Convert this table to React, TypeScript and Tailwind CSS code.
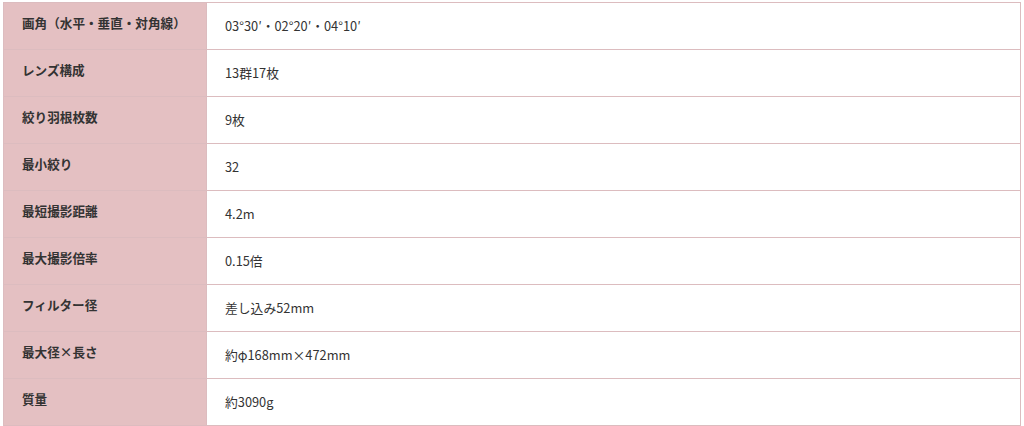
import React from "react";

const rows: [string, string][] = [
  ["画角（水平・垂直・対角線）", "03°30′・02°20′・04°10′"],
  ["レンズ構成", "13群17枚"],
  ["絞り羽根枚数", "9枚"],
  ["最小絞り", "32"],
  ["最短撮影距離", "4.2m"],
  ["最大撮影倍率", "0.15倍"],
  ["フィルター径", "差し込み52mm"],
  ["最大径×長さ", "約φ168mm×472mm"],
  ["質量", "約3090g"],
];

export default function App() {
  return (
    <div
      className="w-[1024px] h-[426px] bg-white pt-[2px] pl-[3px]"
      style={{ fontFamily: '"Noto Sans CJK JP", "Noto Sans", sans-serif' }}
    >
      <div className="w-[1018px] border-t border-l border-r border-[#dcbcbf] text-[#333333]">
        {rows.map(([k, v]) => (
          <div key={k} className="grid grid-cols-[203px_1fr] h-[47px] border-b border-[#dcbcbf]">
            <div className="bg-[#e4c0c2] border-r border-[#dcbcbf] pl-[18px] pt-[11px] text-[12.6px] leading-[18px] font-bold">
              {k}
            </div>
            <div className="flex items-center pl-[18px] text-[12.8px] leading-[18px]">{v}</div>
          </div>
        ))}
      </div>
    </div>
  );
}
